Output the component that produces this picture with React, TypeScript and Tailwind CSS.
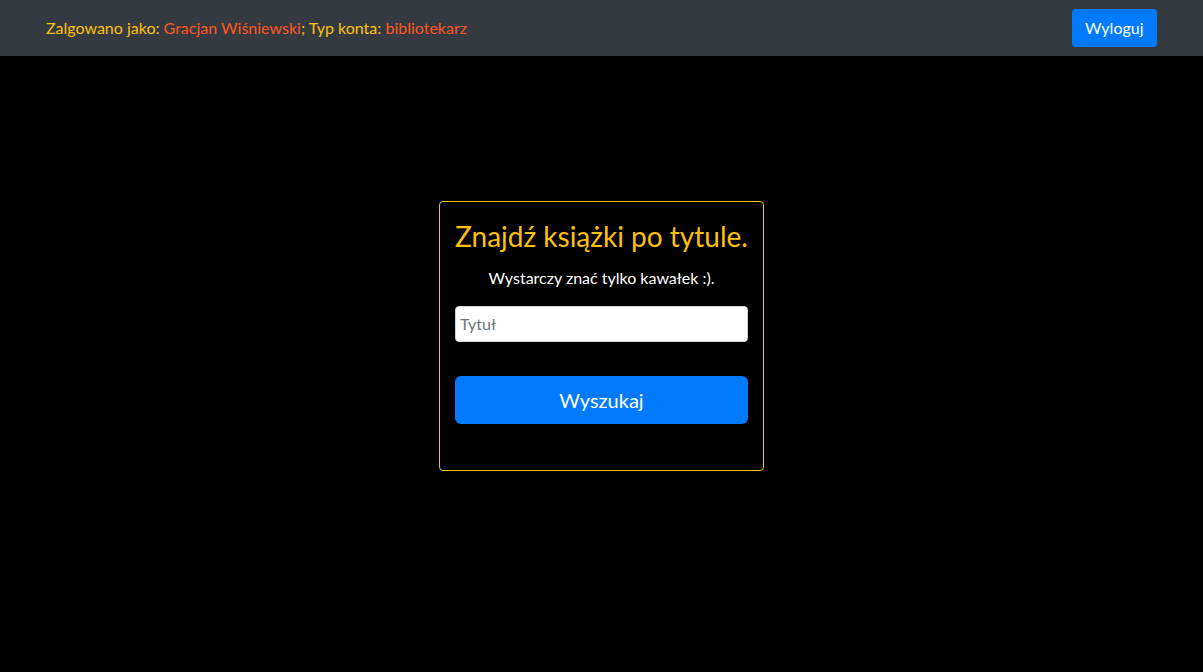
export default function App() {
  return (
    <div className="min-h-[672px] bg-black" style={{ fontFamily: '"Segoe UI", Lato, sans-serif' }}>
      <nav className="flex h-14 items-center justify-between bg-[#343a40] pl-[46px] pr-[46px]">
        <span className="text-base text-[#ffc107]">
          Zalgowano jako: <span className="text-[#ff5722]">Gracjan Wiśniewski</span>; Typ konta:{" "}
          <span className="text-[#ff5722]">bibliotekarz</span>
        </span>
        <button className="h-[38px] rounded bg-[#007bff] px-[13.5px] text-base text-white">Wyloguj</button>
      </nav>
      <div className="flex justify-center pt-[145px]">
        <div className="w-[325px] rounded border border-[#ffc107] px-[15px] pt-4 pb-[46px]">
          <h1 className="mt-[2px] mb-3 whitespace-nowrap text-center text-[28px] leading-[1.2] text-[#ffc107]">
            Znajdź książki po tytule.
          </h1>
          <p className="mb-4 text-center text-base leading-6 text-white">Wystarczy znać tylko kawałek :).</p>
          <input
            placeholder="Tytuł"
            className="block h-9 w-full rounded border border-[#ced4da] bg-white px-1 text-base text-[#495057] placeholder:text-[#6c757d] outline-none"
          />
          <button className="mt-[34px] block h-12 w-full rounded-md bg-[#007bff] text-xl text-white">Wyszukaj</button>
        </div>
      </div>
    </div>
  );
}
